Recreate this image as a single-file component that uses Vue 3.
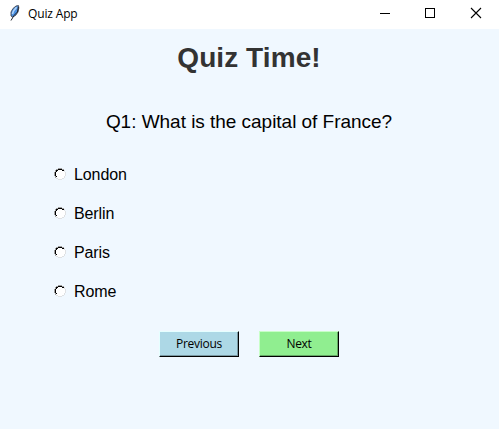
<script setup>
import { ref } from 'vue'

const question = 'Q1: What is the capital of France?'
const options = ['London', 'Berlin', 'Paris', 'Rome']
const selected = ref(null)
</script>

<template>
  <div class="window">
    <header class="titlebar">
      <svg class="feather" width="16" height="18" viewBox="0 0 16 18">
        <path d="M5 12 L5 8 L7 4.5 L10 2 L12.5 1.6 L12.8 4 L12 8 L9.5 11.5 L6.5 13 Z" fill="#4a90e2" stroke="#44444c" stroke-width=".9" />
        <path d="M10.6 3.2 L7.6 6.8 L6.4 10" fill="none" stroke="#b4d6fa" stroke-width="1.6" />
        <path d="M12.4 3 L11.4 8 L8 11.5 L5 16.5" fill="none" stroke="#22252e" stroke-width="1" />
      </svg>
      <span class="caption">Quiz App</span>
      <div class="controls">
        <svg width="46" height="29" viewBox="0 0 46 29" shape-rendering="crispEdges">
          <path d="M18 13.5H28" stroke="#000" />
        </svg>
        <svg width="46" height="29" viewBox="0 0 46 29" shape-rendering="crispEdges">
          <rect x="17.5" y="8.5" width="9" height="9" fill="none" stroke="#000" />
        </svg>
        <svg width="45" height="29" viewBox="0 0 45 29">
          <path d="M17 8L27 18M27 8L17 18" stroke="#000" stroke-width="1.1" />
        </svg>
      </div>
    </header>
    <main>
      <h1>Quiz Time!</h1>
      <p class="question">{{ question }}</p>
      <div class="options">
        <label v-for="o in options" :key="o" class="option" @click="selected = o">
          <svg width="12" height="12" viewBox="0 0 12 12" shape-rendering="crispEdges">
            <path d="M4 1h4v1h2v2h1v4h-1v2h-2v1h-4v-1h-2v-2h-1v-4h1v-2h2z" fill="#fff" />
            <path d="M4 .5h4M2 1.5h2M8 1.5h2M1 2.5h1M1 3.5h1M0 4.5h1M0 5.5h1M0 6.5h1M0 7.5h1M1 8.5h1M1 9.5h1" stroke="#a0a0a0" />
            <path d="M4 1.5h4M2 2.5h2M8 2.5h2M2 3.5h1M1 4.5h1M1 5.5h1M1 6.5h1M1 7.5h1M2 8.5h1" stroke="#000" />
            <path d="M10 2.5h1M10 3.5h1M11 4.5h1M11 5.5h1M11 6.5h1M11 7.5h1M10 8.5h1M10 9.5h1M2 10.5h2M8 10.5h2M4 11.5h4" stroke="#dfe1e3" />
            <circle v-if="selected === o" cx="6" cy="6" r="2" />
          </svg>
          <span>{{ o }}</span>
        </label>
      </div>
      <div class="actions">
        <button class="previous">Previous</button>
        <button class="next">Next</button>
      </div>
    </main>
  </div>
</template>

<style>
body {
  margin: 0;
}
</style>

<style scoped>
.window {
  width: 499px;
  height: 429px;
  display: flex;
  flex-direction: column;
  overflow: hidden;
  background: #f0f8ff;
  color: #000;
  font-family: "Liberation Sans", Arial, sans-serif;
}
.titlebar {
  height: 29px;
  display: flex;
  align-items: flex-start;
  background: #fff;
}
.feather {
  margin: 4px 0 0 6px;
}
.caption {
  margin: 5px 0 0 6px;
  font: 12px/18px "Open Sans", sans-serif;
  letter-spacing: -0.15px;
}
.controls {
  display: flex;
  margin-left: auto;
}
main {
  display: flex;
  flex-direction: column;
  width: 498px;
}
h1 {
  margin: 13px 0 0;
  text-align: center;
  font-size: 28px;
  line-height: 32px;
  letter-spacing: 0.08px;
  color: #333;
}
.question {
  margin: 37px 0 0;
  text-align: center;
  font-size: 19px;
  line-height: 22px;
  letter-spacing: -0.03px;
}
.options {
  display: flex;
  flex-direction: column;
  gap: 19px;
  margin: 31px 0 0 54px;
}
.option {
  display: flex;
  align-items: center;
  gap: 8px;
  height: 20px;
  font-size: 16px;
  line-height: 20px;
  letter-spacing: -0.1px;
}
.option span {
  padding-top: 2px;
}
.actions {
  display: flex;
  justify-content: center;
  gap: 20px;
  margin-top: 30px;
}
button {
  box-sizing: border-box;
  width: 80px;
  height: 26px;
  padding: 0 0 1px;
  border: 1px solid;
  border-radius: 0;
  color: #000;
  font: 12px/22px "Open Sans", sans-serif;
  letter-spacing: -0.3px;
}
.previous {
  background: #add8e6;
  border-color: #e6ffff #000 #000 #e6ffff;
  box-shadow: inset -1px -1px #7a98a2;
}
.next {
  background: #90ee90;
  border-color: #c8ffc8 #000 #000 #c8ffc8;
  box-shadow: inset -1px -1px #65a765;
}
</style>
